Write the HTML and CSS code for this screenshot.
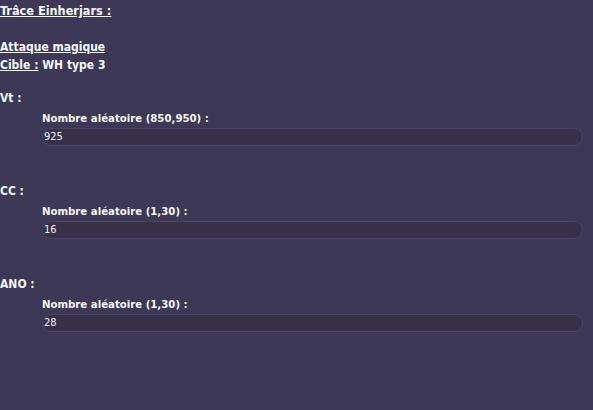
FILE: index.html
```html
<!DOCTYPE html>
<html lang="fr">
<head>
    <meta charset="UTF-8">
    <title>Trâce Einherjars</title>
    <link rel="stylesheet" href="styles.css">
</head>
<body>
    <div class="trace">
        <div class="line title"><u>Trâce Einherjars :</u></div>
        <div class="line"></div>
        <div class="line"><u>Attaque magique</u></div>
        <div class="line"><u>Cible :</u> WH type 3</div>

        <div class="stat">
            <div class="stat-name">Vt :</div>
            <div class="field">
                <div class="field-label">Nombre aléatoire (850,950) :</div>
                <div class="field-value">925</div>
            </div>
        </div>

        <div class="stat">
            <div class="stat-name">CC :</div>
            <div class="field">
                <div class="field-label">Nombre aléatoire (1,30) :</div>
                <div class="field-value">16</div>
            </div>
        </div>

        <div class="stat">
            <div class="stat-name">ANO :</div>
            <div class="field">
                <div class="field-label">Nombre aléatoire (1,30) :</div>
                <div class="field-value">28</div>
            </div>
        </div>
    </div>
</body>
</html>
```

FILE: styles.css
```css
body {
    margin: 0;
    background-color: #3d3856;
    color: #f4f4f4;
    font-family: 'DejaVu Sans Condensed', 'DejaVu Sans', sans-serif;
    font-size: 12px;
    font-weight: bold;
}
.trace {
    padding: 2px 10px 0 0;
}
.line {
    height: 18px;
    line-height: 18px;
}
.title {
    font-size: 12.6px;
}
.stat {
    margin-top: 15px;
    height: 78px;
}
.stat-name {
    line-height: 18px;
}
.field {
    margin-left: 42px;
}
.field-label {
    line-height: 18px;
    margin-top: 3px;
    font-size: 11.3px;
}
.field-value {
    height: 16px;
    line-height: 16px;
    padding-left: 1px;
    background-color: #363149;
    border: 1px solid #4a4564;
    border-radius: 9px;
    font-weight: normal;
    font-size: 11px;
}
```
